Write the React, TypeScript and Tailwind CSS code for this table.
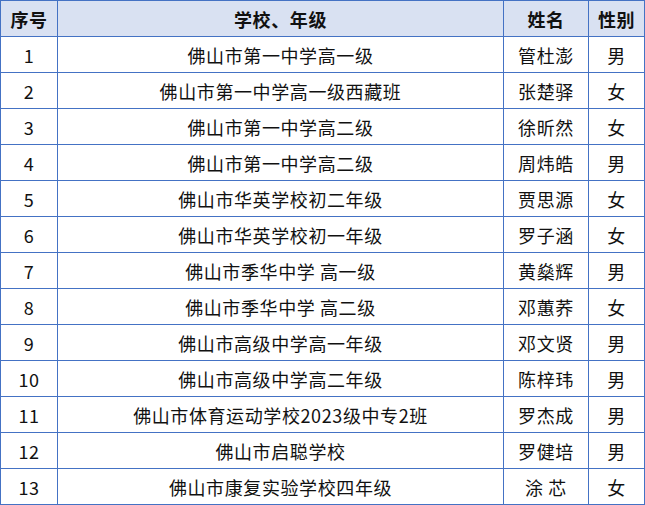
import React from "react";

const rows: [string, string, string, string][] = [
  ["1", "佛山市第一中学高一级", "管杜澎", "男"],
  ["2", "佛山市第一中学高一级西藏班", "张楚驿", "女"],
  ["3", "佛山市第一中学高二级", "徐昕然", "女"],
  ["4", "佛山市第一中学高二级", "周炜皓", "男"],
  ["5", "佛山市华英学校初二年级", "贾思源", "女"],
  ["6", "佛山市华英学校初一年级", "罗子涵", "女"],
  ["7", "佛山市季华中学 高一级", "黄燊辉", "男"],
  ["8", "佛山市季华中学 高二级", "邓蕙荞", "女"],
  ["9", "佛山市高级中学高一年级", "邓文贤", "男"],
  ["10", "佛山市高级中学高二年级", "陈梓玮", "男"],
  ["11", "佛山市体育运动学校2023级中专2班", "罗杰成", "男"],
  ["12", "佛山市启聪学校", "罗健培", "男"],
  ["13", "佛山市康复实验学校四年级", "涂 芯", "女"],
];

const cell = "border border-[#4472c4] h-[36px] p-0 text-center align-middle";

export default function App() {
  return (
    <div className="w-[645px] h-[505px] bg-white">
      <table
        className="table-fixed border-collapse w-[644px] text-[18px] tracking-[0.6px] text-[#111] leading-none"
        style={{ fontFamily: '"Noto Sans CJK SC", "Noto Sans", sans-serif' }}
      >
        <colgroup>
          <col className="w-[57px]" />
          <col className="w-[446px]" />
          <col className="w-[85px]" />
          <col className="w-[56px]" />
        </colgroup>
        <thead>
          <tr className="bg-[#d9e1f2] font-bold">
            <th className={cell}>序号</th>
            <th className={cell}>学校、年级</th>
            <th className={cell}>姓名</th>
            <th className={cell}>性别</th>
          </tr>
        </thead>
        <tbody>
          {rows.map(([n, school, name, sex]) => (
            <tr key={n}>
              <td className={cell}>{n}</td>
              <td className={cell}>{school}</td>
              <td className={`${cell} whitespace-pre`}>{name}</td>
              <td className={cell}>{sex}</td>
            </tr>
          ))}
        </tbody>
      </table>
    </div>
  );
}
